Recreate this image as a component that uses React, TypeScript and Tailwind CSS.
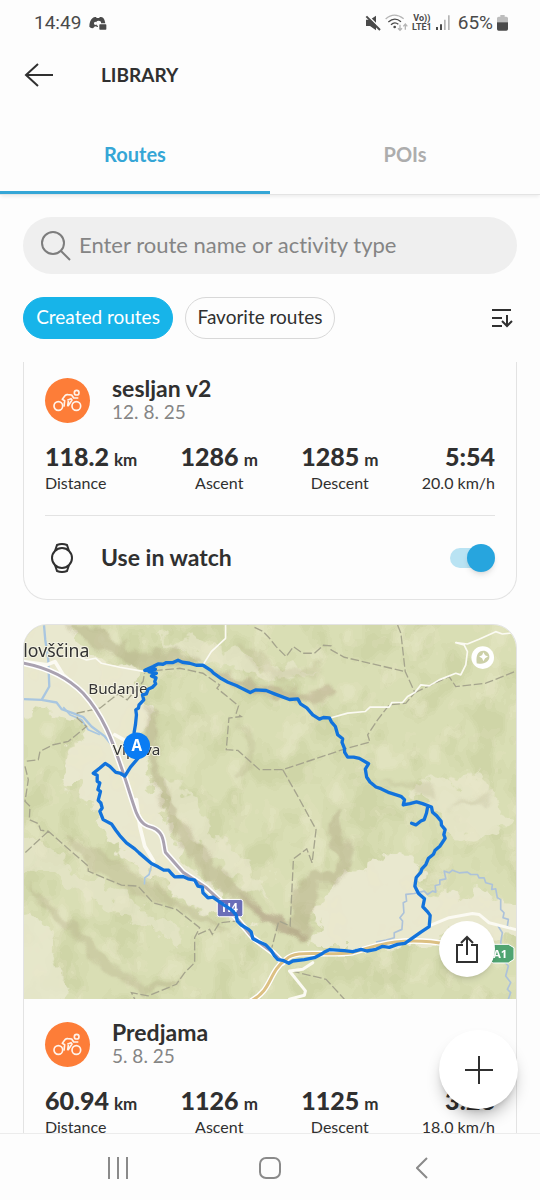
import React, { useState } from 'react';

interface Stat {
  value: string;
  unit?: string;
  label: string;
}

interface RouteItem {
  name: string;
  date: string;
  stats: Stat[];
}

const routes: RouteItem[] = [
  {
    name: 'sesljan v2',
    date: '12. 8. 25',
    stats: [
      { value: '118.2', unit: 'km', label: 'Distance' },
      { value: '1286', unit: 'm', label: 'Ascent' },
      { value: '1285', unit: 'm', label: 'Descent' },
      { value: '5:54', label: '20.0 km/h' },
    ],
  },
  {
    name: 'Predjama',
    date: '5. 8. 25',
    stats: [
      { value: '60.94', unit: 'km', label: 'Distance' },
      { value: '1126', unit: 'm', label: 'Ascent' },
      { value: '1125', unit: 'm', label: 'Descent' },
      { value: '3:23', label: '18.0 km/h' },
    ],
  },
];

function StatusBar() {
  return (
    <div className="flex h-[45px] shrink-0 items-center justify-between pl-[34px] pr-8 font-[Roboto,sans-serif] text-[#4a4a4a]">
      <div className="flex items-center gap-2">
        <span className="text-[19px] leading-6">14:49</span>
        <svg className="h-4 w-[18px]" viewBox="0 0 54 48" fill="#4a4a4a">
          <path d="M11 9 Q15 5 21 6 L23 9 H30 L33 6 Q39 5 43 9 Q48 15 49 25 H36 Q38 17 28 17 Q21 17 21 25 Q21 32 27 33 L27 36 L18 34 L12 40 Q5 40 1 35 Q1 17 11 9 Z" />
          <ellipse cx="19" cy="25" rx="4" ry="5" fill="#fdfdfd" />
          <rect x="31" y="28" width="21" height="16" rx="2" />
        </svg>
      </div>
      <div className="flex items-center gap-1">
        <svg className="h-4 w-4" viewBox="0 0 48 48">
          <path d="M3 14 H15 L33 2 V46 L15 33 H3 Z" fill="#4a4a4a" />
          <path d="M8 2 L48 42" stroke="#fdfdfd" strokeWidth="5" />
          <path d="M4 4 L45 45" stroke="#4a4a4a" strokeWidth="6" />
        </svg>
        <svg className="h-[18px] w-[23px]" viewBox="0 0 69 54" fill="none" strokeWidth="4">
          <path d="M2 15 Q27 -8 56 14" stroke="#b5b5b5" />
          <path d="M10 24 Q29 7 48 23" stroke="#4a4a4a" />
          <path d="M18 32 Q29 22 40 31" stroke="#4a4a4a" />
          <circle cx="29" cy="39" r="4" fill="#4a4a4a" />
          <path d="M45 32 V48 M39 43 L45 49 L51 43 M61 47 V31 M55 37 L61 30 L67 37" stroke="#b5b5b5" />
        </svg>
        <span className="flex flex-col items-center text-[9px] font-bold leading-[9px]">
          <span>Vo))</span>
          <span>LTE1</span>
        </span>
        <svg className="h-[15px] w-[14px]" viewBox="0 0 42 45">
          <path d="M0 36 H6 V45 H0 Z M12 28 H18 V45 H12 Z" fill="#4a4a4a" />
          <path d="M24 14 H29 V45 H24 Z M36 1 H41 V45 H36 Z" fill="#b5b5b5" />
        </svg>
        <span className="ml-1 text-[19px] leading-6">65%</span>
        <svg className="h-4 w-[11px]" viewBox="0 0 33 48">
          <path d="M10 0 H23 V5 H28 Q33 5 33 10 V22 H0 V10 Q0 5 5 5 H10 Z" fill="#bdbdbd" />
          <path d="M0 22 H33 V42 Q33 47 28 47 H5 Q0 47 0 42 Z" fill="#4a4a4a" />
        </svg>
      </div>
    </div>
  );
}

function BikeIcon() {
  return (
    <span className="flex size-[45px] shrink-0 items-center justify-center rounded-full bg-[#fd7d38]">
      <svg className="h-[23px] w-[29px]" viewBox="0 0 87 69" fill="none" stroke="#fff3ea" strokeWidth="5" strokeLinejoin="round">
        <circle cx="16" cy="51" r="13" />
        <circle cx="70" cy="51" r="13" />
        <circle cx="71" cy="11" r="7" />
        <path d="M33 53 L35 35 L28 31 L37 19 Q40 16 45 17 L56 18 L62 27 H76" />
        <path d="M43 34 L54 29 L57 33 L45 51 M46 36 L44 52" />
      </svg>
    </span>
  );
}

function RouteSummary({ route }: { route: RouteItem }) {
  return (
    <>
      <div className="flex items-center gap-[22px]">
        <BikeIcon />
        <div>
          <h2 className="text-[23px] font-bold leading-6">{route.name}</h2>
          <p className="text-[19px] leading-6 text-[#858585]">{route.date}</p>
        </div>
      </div>
      <dl className="mt-4 flex justify-between">
        {route.stats.map((stat, i) => (
          <div
            key={stat.label}
            className={`flex flex-col-reverse ${i === 0 ? 'items-start' : i === 3 ? 'items-end' : 'items-center'}`}
          >
            <dt className="text-base leading-[22px]">{stat.label}</dt>
            <dd className="flex h-8 items-baseline gap-[5px] text-[25px] font-black leading-8">
              {stat.value}
              {stat.unit && <span className="text-[17px] font-bold">{stat.unit}</span>}
            </dd>
          </div>
        ))}
      </dl>
    </>
  );
}

const TRACK =
  'M350 378 L343 338 L347 315 L350 285 L348 270 L356 265 L358 255 L372 240 L368 225 L380 222 L385 208 L398 202 L408 192 L405 185 L409 174 L395 168 L410 160 L388 156 L407 148 L375 151 L400 140 L415 132 L430 133 L440 128 L460 128 L475 121 L488 127 L510 130 L530 136 L550 136 L575 152 L582 160 L605 176 L625 187 L650 197 L692 218 L708 210 L740 212 L765 222 L810 239 L835 237 L843 252 L862 264 L880 285 L900 298 L912 293 L930 294 L936 306 L948 320 L955 345 L970 357 L968 368 L975 385 L976 398 L985 412 L1003 412 L1020 416 L1048 432 L1038 448 L1042 472 L1052 487 L1070 502 L1085 507 L1110 519 L1145 530 L1156 540 L1152 556 L1172 552 L1192 547 L1210 552 L1237 562 L1240 578 L1252 588 L1266 605 L1267 617 L1278 630 L1274 645 L1278 656 L1262 680 L1248 692 L1243 704 L1228 716 L1220 735 L1208 748 L1205 758 L1191 774 L1187 800 L1198 822 L1216 838 L1211 862 L1226 878 L1233 888 L1230 922 L1205 938 L1157 972 L1135 975 L1110 984 L1090 981 L1070 990 L1043 995 L1025 990 L1000 997 L975 994 L930 991 L915 998 L905 1005 L885 1015 L855 1021 L820 1025 L808 1032 L790 1023 L775 1021 L765 1010 L755 993 L738 976 L718 967 L700 958 L695 938 L687 930 L665 917 L653 905 L650 887 L637 872 L615 858 L587 838 L580 833 L565 835 L550 820 L548 803 L535 800 L525 782 L505 778 L490 771 L465 772 L455 762 L447 752 L432 752 L415 742 L395 732 L358 700 L345 688 L320 670 L300 648 L288 632 L275 613 L250 600 L240 575 L247 565 L243 550 L235 542 L242 515 L234 510 L240 490 L232 485 L232 467 L220 461 L240 445 L256 431 L270 440 L288 458 L300 460 L315 469 L332 442 L357 413 M1225 564 L1222 580 L1215 600 L1205 604 L1190 616 L1177 611';

const BORDERS =
  'M705 22 L730 34 L750 55 L770 80 L800 110 L822 80 L850 100 L885 100 L912 76 L935 78 L935 90 L975 112 L1158 155 M1135 15 L1145 40 L1158 155 L1187 218 L1160 250 L1110 255 L1075 300 L1045 345 L1052 367 L975 388 L790 450 L720 450 L655 392 L620 390 L628 295 L665 290 L650 280 L657 258 L592 205 L600 195 L550 160 L480 145 L375 155 L370 185 L322 240 L295 222 L240 265 L172 280 L172 295 L200 320 L145 365 L100 375 L60 395 L55 420 L15 425 M15 440 L25 480 L15 545 L30 560 L28 600 L55 612 L62 632 L85 635 L205 740 L205 755 L305 797 L355 800 L400 850 L470 870 L540 925 L525 955 L525 1030 L495 1060 L470 1095 L385 1130 L335 1120 L345 1140 M85 635 L15 700 M790 450 L838 535 L890 630 L878 730 L862 688 L822 718 L812 920 L778 905 L757 985 M1187 218 L1290 170 L1310 200 L1400 190 L1488 155 M535 945 L570 930 L578 945 L600 910 L650 905 M815 1055 L920 1080 L975 1140';

const H4 =
  'M12 130 C90 145 150 180 190 220 C250 285 280 370 300 430 C325 500 335 540 350 580 C365 615 380 620 400 625 C435 640 430 670 437 698 L490 758 L560 805 L600 842 L650 895 L700 955 L760 1000 L790 1030';

const A1 =
  'M695 1145 C760 1110 745 1060 800 1020 C830 990 900 1010 1000 1000 C1080 975 1150 950 1290 975 L1420 995';

function RouteMap() {
  return (
    <svg
      className="block aspect-[493/375] w-full"
      viewBox="12 15 1479 1125"
      preserveAspectRatio="xMidYMid slice"
      role="img"
      aria-label="Route map"
    >
      <defs>
        {/* posterised noise for the land cover patches */}
        <filter id="cover" x="0" y="0" width="100%" height="100%" colorInterpolationFilters="sRGB">
          <feTurbulence type="fractalNoise" baseFrequency="0.011 0.008" numOctaves="3" seed="11" />
          <feColorMatrix values="0 0 0 0 0.76  0 0 0 0 0.79  0 0 0 0 0.59  2.6 0 0 0 -0.9" />
          <feComponentTransfer>
            <feFuncA type="discrete" tableValues="0 0 0.15 0.3 0.42" />
          </feComponentTransfer>
        </filter>
        <filter id="fields" x="0" y="0" width="100%" height="100%" colorInterpolationFilters="sRGB">
          <feTurbulence type="fractalNoise" baseFrequency="0.013 0.011" numOctaves="3" seed="4" />
          <feColorMatrix values="0 0 0 0 0.92  0 0 0 0 0.91  0 0 0 0 0.8  2.6 0 0 0 -1.1" />
          <feComponentTransfer>
            <feFuncA type="discrete" tableValues="0 0 0.2 0.45 0.6" />
          </feComponentTransfer>
        </filter>
        {/* breaks up the straight edges of valleys and ridges */}
        <filter id="rough" x="-5%" y="-5%" width="110%" height="110%">
          <feTurbulence type="fractalNoise" baseFrequency="0.02" numOctaves="3" seed="7" />
          <feDisplacementMap in="SourceGraphic" scale="90" xChannelSelector="R" yChannelSelector="G" />
        </filter>
        <filter id="relief" x="-5%" y="-5%" width="110%" height="110%">
          <feTurbulence type="fractalNoise" baseFrequency="0.02" numOctaves="2" seed="9" result="noise" />
          <feGaussianBlur in="SourceGraphic" stdDeviation="4" />
          <feDisplacementMap in2="noise" scale="50" xChannelSelector="R" yChannelSelector="G" />
        </filter>
      </defs>

      <rect x="12" y="15" width="1479" height="1125" fill="#d9deb4" />
      <rect x="12" y="15" width="1479" height="1125" filter="url(#cover)" />

      {/* valleys and open land */}
      <g fill="#e9e8cf" filter="url(#rough)">
        <path d="M-40 -20 L150 -20 L190 90 L300 130 L375 150 L350 200 L385 260 L375 400 L400 520 L440 560 L460 680 L620 830 L700 930 L640 910 L500 850 L400 760 L290 700 L240 620 L215 560 L120 470 L150 380 L200 330 L120 290 L-40 270 Z" />
        <path d="M940 790 L1040 740 L1130 690 L1200 740 L1180 800 L1260 830 L1380 820 L1530 860 L1530 960 L1340 940 L1100 990 L900 990 L870 960 L900 880 Z" />
        <path d="M1180 500 L1240 480 L1300 500 L1330 450 L1400 480 L1440 560 L1480 600 L1440 630 L1350 660 L1290 650 L1260 590 Z" opacity="0.7" />
        <path d="M420 480 L520 520 L600 650 L700 760 L750 850 L640 770 L540 690 L470 600 Z" opacity="0.6" />
        <path d="M-40 900 L60 890 L110 960 L90 1020 L140 1080 L110 1180 L-40 1180 Z" opacity="0.8" />
        <path d="M-40 640 L90 680 L160 760 L260 800 L400 890 L480 920 L490 980 L420 940 L300 890 L200 850 L100 770 L-40 730 Z" opacity="0.55" />
        <path d="M410 60 L500 50 L610 90 L640 60 L700 130 L900 160 L820 180 L650 150 L560 120 Z" opacity="0.6" />
      </g>
      <rect x="12" y="15" width="1479" height="1125" filter="url(#fields)" opacity="0.8" />

      {/* ridges */}
      <g fill="#aea681" filter="url(#relief)">
        <path d="M130 15 L230 20 L290 60 L360 100 L460 90 L520 112 L560 130 L470 128 L380 150 L300 120 L240 90 L190 60 Z" opacity="0.42" />
        <path d="M560 140 L660 185 L780 200 L870 218 L925 200 L945 215 L900 250 L820 235 L700 220 L610 185 Z" fill="#b09a80" opacity="0.4" />
        <path d="M385 240 L420 330 L410 430 L450 520 L500 620 L560 690 L620 770 L720 860 L850 940 L850 970 L780 930 L690 880 L600 810 L520 730 L460 640 L420 550 L390 450 L375 350 Z" opacity="0.4" />
        <path d="M650 830 L740 870 L850 935 L855 965 L740 910 Z" fill="#a98f7c" opacity="0.32" />
        <path d="M800 930 L825 820 L870 750 L940 770 L965 720 L925 670 L930 590 L960 560 L975 640 L1005 690 L985 760 L945 800 L890 800 L880 900 L850 975 Z" opacity="0.4" />
        <path d="M12 790 L100 860 L200 950 L270 1030 L370 1090 L470 1080 L500 1050 L470 1100 L370 1125 L250 1060 L150 940 L60 860 Z" opacity="0.3" />
        <path d="M130 640 L240 690 L360 770 L480 850 L560 890 L640 950 L560 920 L480 870 L380 840 L260 780 L190 730 Z" opacity="0.3" />
        <path d="M650 70 L720 90 L770 150 L860 150 L920 120 L880 180 L790 185 L700 130 Z" opacity="0.2" />
        <path d="M650 300 L710 360 L690 470 L650 480 L680 400 Z M1240 540 L1150 500 L1060 500 L1150 480 L1240 500 Z M1290 560 L1420 520 L1400 560 Z" opacity="0.22" />
      </g>

      {/* rivers */}
      <g fill="none" stroke="#a9c6e0" strokeWidth="5" strokeLinejoin="round">
        <path d="M72 15 L76 60 L85 120 L88 200 L65 240 L12 238 M65 240 L110 248 L125 268 L165 282 L190 292 L215 320 L255 350 L280 380" strokeWidth="7" />
        <path d="M130 262 L150 285 L185 300 L205 330 L240 345" />
        <path d="M395 738 L388 765 L375 775 L374 795" />
        <path
          stroke="#adc2d9"
          d="M1070 968 L1100 962 L1125 955 L1125 940 L1148 930 L1150 905 L1142 895 L1154 880 L1152 850 L1162 845 L1160 825 L1185 822 L1215 815 L1225 825 L1240 815 L1250 818 L1248 798 L1262 795 L1262 782 L1280 778 L1275 755 L1290 760 L1300 752 L1320 760 L1345 758 L1355 765 L1375 765 L1380 775 L1395 775 L1400 790 L1420 795 L1418 810 L1430 808 L1435 835 L1445 840 L1445 870 L1455 880 L1452 895 L1468 900 L1465 920 L1480 930 M1437 920 L1450 940 L1445 970 L1455 1000 L1450 1020 L1468 1040 L1460 1070 L1475 1090 L1465 1110 L1475 1120 L1468 1140"
        />
      </g>

      <path d={BORDERS} fill="none" stroke="#a5a48d" strokeWidth="4" strokeDasharray="26 8" />

      {/* roads */}
      <g fill="none" strokeLinejoin="round" strokeLinecap="round">
        <g stroke="#fbfaf2">
          <path strokeWidth="5" d="M170 108 L200 120 L228 115 L245 130 L300 142 L375 155 M618 15 L618 55 L575 95 L552 132" />
          <path strokeWidth="5" d="M935 294 L985 280 L1038 275 L1052 262 L1110 262 L1118 248 L1150 248 L1165 230 L1187 218 L1205 195 L1230 198 L1260 180 L1310 160 L1325 165 L1340 135 L1345 95 L1335 75 L1310 68 L1345 72 L1380 58 L1430 35 L1450 42 L1488 38" />
          <path strokeWidth="11" d="M12 125 L80 135 L105 125 L130 165 L165 195 M285 345 L330 370 M350 540 L360 620 L375 680 L402 725" />
          <path strokeWidth="9" d="M1228 920 L1290 895 L1360 882 L1380 885 L1410 910 L1488 930 M880 1030 L850 1050 L810 1055 L858 1115 L855 1128 L810 1140" />
        </g>
        <path d={H4} stroke="#ffffff" strokeWidth="18" />
        <path d={H4} stroke="#aaa2b0" strokeWidth="9" />
        <path d={A1} stroke="#ffffff" strokeWidth="17" />
        <path d={A1} stroke="#dcc083" strokeWidth="9" />
      </g>

      <g fontFamily="'Noto Sans', sans-serif" fill="#333333" stroke="#f4f3e4" strokeWidth="6" paintOrder="stroke">
        <text x="10" y="111" fontSize="53">lovščina</text>
        <text x="205" y="221" fontSize="46">Budanje</text>
        <text x="279" y="406" fontSize="46">Vipava</text>
      </g>

      <rect x="593" y="840" width="77" height="52" rx="7" fill="#6a6eb8" stroke="#ffffff" strokeWidth="3" />
      <text x="631" y="879" fontSize="36" fontWeight="700" fontFamily="'Noto Sans', sans-serif" textAnchor="middle" fill="#ffffff">
        H4
      </text>
      <path d="M1405 982 L1422 975 H1468 L1485 985 V1020 L1468 1031 H1422 L1405 1020 Z" fill="#4fa471" stroke="#ffffff" strokeWidth="3" />
      <text x="1443" y="1016" fontSize="34" fontWeight="700" fontFamily="'Noto Sans', sans-serif" textAnchor="middle" fill="#ffffff">
        A1
      </text>

      <path d={TRACK} fill="none" stroke="#1273dc" strokeWidth="10" strokeLinejoin="round" strokeLinecap="round" />
      <circle cx="351" cy="378" r="40" fill="#0a7cf3" />
      <text x="351" y="394" fontSize="46" fontWeight="700" fontFamily="'Noto Sans', sans-serif" textAnchor="middle" fill="#ffffff">
        A
      </text>

      {/* attribution mark */}
      <circle cx="1391" cy="113" r="34" fill="#ffffff" />
      <path d="M1373 131 C1371 118 1372 101 1383 95 C1397 88 1411 97 1411 111 C1411 128 1389 133 1373 131 Z" fill="#ccd0a8" />
      <path d="M1393 97 L1398 106 L1407 110 L1398 115 L1393 124 L1389 115 L1380 110 L1389 106 Z" fill="#ffffff" />
    </svg>
  );
}

export default function App() {
  const [tab, setTab] = useState('Routes');
  const [filter, setFilter] = useState('Created routes');
  const [inWatch, setInWatch] = useState(true);

  return (
    <div className="flex h-screen flex-col overflow-hidden bg-[#fdfdfd] font-[Lato,sans-serif] text-[#303030] [font-variant-ligatures:none]">
      <StatusBar />

      <header className="flex h-[60px] shrink-0 items-center gap-[46px] pl-6">
        <button type="button" aria-label="Back">
          <svg className="h-6 w-[31px]" viewBox="0 0 31 24" fill="none" stroke="#303030" strokeWidth="2">
            <path d="M29 12 H2 M14 1 L2 12 L14 23" />
          </svg>
        </button>
        <h1 className="text-[19px] font-bold">LIBRARY</h1>
      </header>

      <div
        role="tablist"
        className="grid h-[90px] shrink-0 grid-cols-2 border-b border-[#e4e4e4] shadow-[0_3px_3px_-1px_rgba(0,0,0,0.06)]"
      >
        {['Routes', 'POIs'].map((name) => (
          <button
            key={name}
            type="button"
            role="tab"
            aria-selected={tab === name}
            onClick={() => setTab(name)}
            className={`border-b-3 pt-3 text-xl font-bold ${
              tab === name ? 'border-[#35a6d6] text-[#35a6d6]' : 'border-transparent text-[#adadad]'
            }`}
          >
            {name}
          </button>
        ))}
      </div>

      <div className="shrink-0 px-[23px] pb-[23px] pt-[22px]">
        <label className="flex h-[57px] items-center gap-2 rounded-full bg-[#efefef] pl-[18px] pr-5">
          <svg className="size-[30px] shrink-0" viewBox="0 0 30 30" fill="none" stroke="#7d7d7d" strokeWidth="2">
            <circle cx="12" cy="12" r="11" />
            <path d="M20 20 L29 29" />
          </svg>
          <input
            type="text"
            aria-label="Search routes"
            placeholder="Enter route name or activity type"
            className="min-w-0 flex-1 bg-transparent pb-0.5 text-[22px] outline-none placeholder:text-[#858585]"
          />
        </label>

        <div className="mt-[23px] flex items-center gap-3">
          {['Created routes', 'Favorite routes'].map((name) => (
            <button
              key={name}
              type="button"
              onClick={() => setFilter(name)}
              className={`h-[42px] w-[150px] whitespace-nowrap rounded-full border pb-0.5 text-[19px] ${
                filter === name ? 'border-[#17b4e9] bg-[#17b4e9] text-white' : 'border-[#d8d8d8]'
              }`}
            >
              {name}
            </button>
          ))}
          <button type="button" aria-label="Sort" className="ml-auto mr-1">
            <svg className="h-5 w-[22px]" viewBox="0 0 22 20" fill="none" stroke="#303030" strokeWidth="2">
              <path d="M1 2 H20 M1 10 H11 M1 18 H11 M16 7 V18 M11 13 L16 18 L21 13" />
            </svg>
          </button>
        </div>
      </div>

      <main className="relative min-h-0 flex-1 overflow-hidden px-[23px]">
        <article className="rounded-b-3xl border border-t-0 border-[#e3e3e3] px-[21px] pt-3.5">
          <RouteSummary route={routes[0]} />
          <div className="mt-[21px] flex h-[84px] items-center border-t border-[#e3e3e3] pl-1">
            <svg className="h-[30px] w-[26px]" viewBox="0 0 26 30" fill="none" stroke="#303030" strokeWidth="2">
              <circle cx="13" cy="15" r="10" />
              <path d="M6 8 L8 2 Q13 0 18 2 L20 8 M6 22 L8 28 Q13 30 18 28 L20 22" />
            </svg>
            <label htmlFor="in-watch" className="ml-[26px] text-[23px] font-bold">
              Use in watch
            </label>
            <label className="relative ml-auto flex h-7 w-[45px] items-center">
              <input
                id="in-watch"
                type="checkbox"
                role="switch"
                checked={inWatch}
                onChange={(e) => setInWatch(e.target.checked)}
                className="peer sr-only"
              />
              <span className="h-5 w-[40px] rounded-full bg-[#dddddd] peer-checked:bg-[#b9e3f3]" />
              <span className="absolute left-0 top-0 size-7 rounded-full bg-[#909090] shadow-md peer-checked:left-auto peer-checked:right-0 peer-checked:bg-[#27a5de]" />
            </label>
          </div>
        </article>

        <article className="mt-6 overflow-hidden rounded-t-3xl border border-[#e3e3e3]">
          <div className="relative">
            <RouteMap />
            <button
              type="button"
              aria-label="Share route"
              className="absolute bottom-[22px] right-[21px] flex size-14 items-center justify-center rounded-full bg-white shadow-md"
            >
              <svg className="h-7 w-[22px]" viewBox="0 0 22 28" fill="none" stroke="#303030" strokeWidth="2">
                <path d="M7 10 H1 V27 H21 V10 H15 M11 20 V2 M5 8 L11 2 L17 8" />
              </svg>
            </button>
          </div>
          <div className="px-[21px] pb-6 pt-[21px]">
            <RouteSummary route={routes[1]} />
          </div>
        </article>

        <button
          type="button"
          aria-label="Create route"
          className="absolute bottom-6 right-[22px] flex size-[79px] items-center justify-center rounded-full bg-white shadow-lg shadow-black/25"
        >
          <svg className="size-7" viewBox="0 0 28 28" stroke="#303030" strokeWidth="2">
            <path d="M14 0 V28 M0 14 H28" />
          </svg>
        </button>
      </main>

      <nav className="grid h-[67px] shrink-0 grid-cols-3 items-center border-t border-[#ececec] px-[42px] pt-0.5">
        <button type="button" aria-label="Recent apps" className="flex justify-center">
          <svg className="h-[22px] w-5" viewBox="0 0 20 22" stroke="#8a8a8a" strokeWidth="2">
            <path d="M1 0 V22 M10 0 V22 M19 0 V22" />
          </svg>
        </button>
        <button type="button" aria-label="Home" className="flex justify-center">
          <svg className="size-[22px]" viewBox="0 0 22 22" fill="none" stroke="#8a8a8a" strokeWidth="2">
            <rect x="1" y="1" width="20" height="20" rx="6" />
          </svg>
        </button>
        <button type="button" aria-label="Back" className="flex justify-center">
          <svg className="h-[22px] w-3" viewBox="0 0 12 22" fill="none" stroke="#8a8a8a" strokeWidth="2">
            <path d="M11 1 L1 11 L11 21" />
          </svg>
        </button>
      </nav>
    </div>
  );
}
